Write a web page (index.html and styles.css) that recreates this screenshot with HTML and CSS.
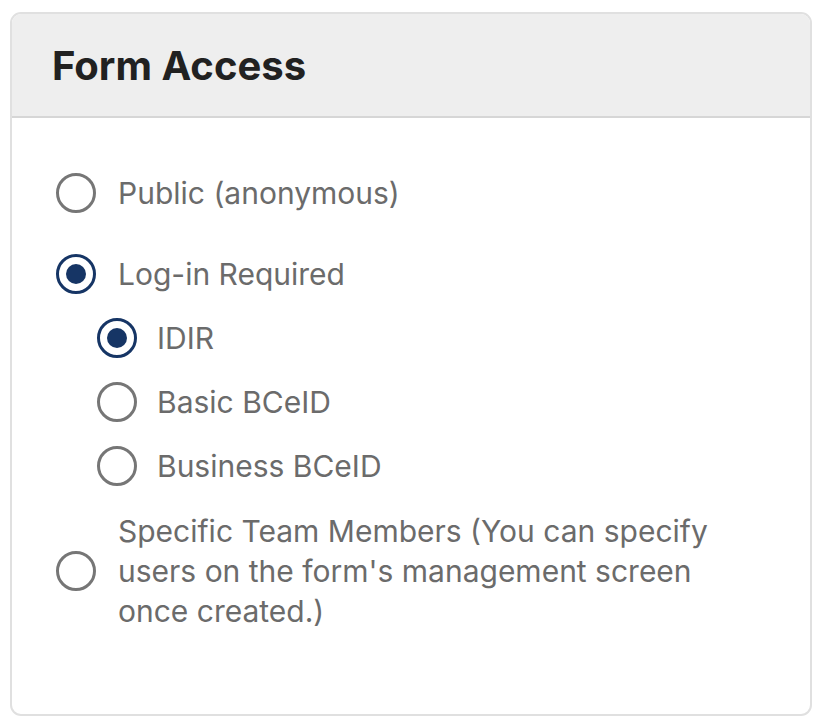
FILE: index.html
```html
<!DOCTYPE html>
<html lang="en">
<head>
<meta charset="utf-8">
<title>Form Access</title>
<link rel="stylesheet" href="styles.css">
</head>
<body>
<section class="card">
  <header class="card-header">
    <h2 class="card-title">Form Access</h2>
  </header>
  <div class="card-body">
    <div class="radio-group">
      <label class="radio">
        <span class="radio-ctrl"></span>
        <span class="radio-label">Public (anonymous)</span>
      </label>
      <label class="radio checked">
        <span class="radio-ctrl"></span>
        <span class="radio-label">Log-in Required</span>
      </label>
      <div class="radio-group sub">
        <label class="radio checked">
          <span class="radio-ctrl"></span>
          <span class="radio-label">IDIR</span>
        </label>
        <label class="radio">
          <span class="radio-ctrl"></span>
          <span class="radio-label">Basic BCeID</span>
        </label>
        <label class="radio">
          <span class="radio-ctrl"></span>
          <span class="radio-label">Business BCeID</span>
        </label>
      </div>
      <label class="radio multi">
        <span class="radio-ctrl"></span>
        <span class="radio-label">Specific Team Members (You can specify users on the form's management screen once created.)</span>
      </label>
    </div>
  </div>
</section>
</body>
</html>
```
FILE: styles.css
```css
html, body {
  margin: 0;
  padding: 0;
  background: #ffffff;
}
body {
  font-family: Inter, "Noto Sans", "Liberation Sans", sans-serif;
  padding: 12px 12px 12px 10px;
}
.card {
  width: 802px;
  height: 704px;
  box-sizing: border-box;
  border: 2px solid #e0e0e0;
  border-radius: 11px;
  overflow: hidden;
  display: flex;
  flex-direction: column;
}
.card-header {
  background: #eeeeee;
  height: 104px;
  box-sizing: border-box;
  border-bottom: 2px solid #d6d6d6;
  padding: 0 40px;
  display: flex;
  align-items: center;
}
.card-title {
  margin: 0;
  font-size: 40px;
  font-weight: 700;
  color: #212121;
  line-height: 44px;
  padding-top: 2px;
}
.card-body {
  padding: 55px 64px 0 44px;
}
.radio-group {
  display: flex;
  flex-direction: column;
}
.radio {
  display: flex;
  align-items: center;
  gap: 22px;
  font-size: 30px;
  line-height: 40px;
  color: #6b6b6b;
}
.radio + .radio {
  margin-top: 41px;
}
.radio-group.sub {
  margin-top: 24px;
  padding-left: 41px;
  gap: 24px;
}
.radio-group.sub .radio {
  gap: 20px;
}
.radio-group.sub + .radio {
  margin-top: 25px;
}
.radio-group.sub .radio + .radio {
  margin-top: 0;
}
.radio-ctrl {
  flex: none;
  width: 40px;
  height: 40px;
  box-sizing: border-box;
  border: 3.5px solid #767676;
  border-radius: 50%;
  position: relative;
}
.radio.checked .radio-ctrl {
  border-color: #163565;
}
.radio.checked .radio-ctrl::after {
  content: "";
  position: absolute;
  left: 6.5px;
  top: 6.5px;
  width: 20px;
  height: 20px;
  border-radius: 50%;
  background: #163565;
}
```
